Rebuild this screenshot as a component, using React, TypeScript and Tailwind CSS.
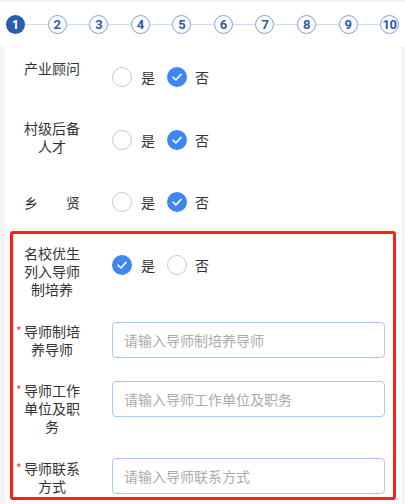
import React from 'react'

const font = { fontFamily: '"Noto Sans CJK SC", "Noto Sans", sans-serif' }

function Steps() {
  const nums = [1, 2, 3, 4, 5, 6, 7, 8, 9, 10]
  return (
    <div className="flex items-center bg-white h-[45px] px-[6px]">
      {nums.map((n, i) => (
        <React.Fragment key={n}>
          {i > 0 && <div className="flex-1 h-px bg-[#cfdcef]" />}
          <div
            className={
              n === 1
                ? 'w-[19px] h-[19px] rounded-full bg-[#2b5cab] text-white flex items-center justify-center text-[13px] font-bold'
                : 'w-[19px] h-[19px] rounded-full border border-[#7d9fd6] bg-white text-[#2b5cab] flex items-center justify-center text-[13px] font-bold tracking-[-0.5px]'
            }
            style={{ fontFamily: 'Roboto, "Liberation Sans", sans-serif' }}
          >
            {n}
          </div>
        </React.Fragment>
      ))}
    </div>
  )
}

function Radio({ checked, className = '' }: { checked: boolean; className?: string }) {
  if (checked) {
    return (
      <span className={`shrink-0 w-5 h-5 rounded-full bg-[#3e86f1] flex items-center justify-center ${className}`}>
        <svg width="12" height="12" viewBox="0 0 12 12" fill="none">
          <path d="M2 6.2 L4.9 9 L10 3.4" stroke="white" strokeWidth="1.6" strokeLinecap="round" strokeLinejoin="round" />
        </svg>
      </span>
    )
  }
  return <span className={`shrink-0 block w-5 h-5 rounded-full border border-[#c9c9c9] bg-white ${className}`} />
}

function YesNo({ yes }: { yes: boolean }) {
  return (
    <div className="flex items-center text-[14px] text-[#333] leading-5">
      <Radio checked={yes} />
      <span className="ml-[9px]">是</span>
      <Radio checked={!yes} className="ml-3" />
      <span className="ml-[8px]">否</span>
    </div>
  )
}

function Label({ lines, required }: { lines: string[]; required?: boolean }) {
  return (
    <div className="relative w-[56px] text-center text-[14px] leading-[18px] text-[#333]">
      {required && <span className="absolute -left-[8px] top-0 text-[#e53935] text-[12px]">*</span>}
      {lines.map((l) => (
        <div key={l} className="whitespace-pre">{l}</div>
      ))}
    </div>
  )
}

function Field({ placeholder, mt }: { placeholder: string; mt: string }) {
  return (
    <div className={`ml-8 ${mt} w-[273px] h-9 border border-[#a9c9f7] rounded-[4px] flex items-center pl-[11px] text-[14px] text-[#ababab]`}>
      {placeholder}
    </div>
  )
}

export default function App() {
  return (
    <div className="w-[405px] h-[504px] overflow-hidden bg-[#f4f4f4]" style={font}>
      <div className="h-[2px] bg-[#f1f1f1]" />
      <Steps />
      <div className="mx-[5px] w-[396px] bg-white pb-4">
        <div className="flex items-start h-[58px] pl-[19px]">
          <div className="pt-3">
            <Label lines={['产业顾问']} />
          </div>
          <div className="ml-8 pt-5">
            <YesNo yes={false} />
          </div>
        </div>
        <div className="flex items-start h-[75px] pl-[19px]">
          <div className="pt-[14px]">
            <Label lines={['村级后备', '人才']} />
          </div>
          <div className="ml-8 pt-[25px]">
            <YesNo yes={false} />
          </div>
        </div>
        <div className="flex items-start h-[51px] pl-[19px]">
          <div className="pt-[13px]">
            <Label lines={['乡　　贤']} />
          </div>
          <div className="ml-8 pt-3">
            <YesNo yes={false} />
          </div>
        </div>

        <div className="ml-[5px] w-[386px] border-[3px] border-[#ff1f14] rounded-[3px] pl-[11px]">
          <div className="flex items-start h-[76px]">
            <div className="pt-[10px]">
              <Label lines={['名校优生', '列入导师', '制培养']} />
            </div>
            <div className="ml-8 pt-[21px]">
              <YesNo yes={true} />
            </div>
          </div>
          <div className="flex items-start h-[59px]">
            <div className="pt-3">
              <Label required lines={['导师制培', '养导师']} />
            </div>
            <Field placeholder="请输入导师制培养导师" mt="mt-3" />
          </div>
          <div className="flex items-start h-[78px]">
            <div className="pt-3">
              <Label required lines={['导师工作', '单位及职', '务']} />
            </div>
            <Field placeholder="请输入导师工作单位及职务" mt="mt-3" />
          </div>
          <div className="flex items-start h-[50px]">
            <div className="pt-3">
              <Label required lines={['导师联系', '方式']} />
            </div>
            <Field placeholder="请输入导师联系方式" mt="mt-[11px]" />
          </div>
        </div>
      </div>
    </div>
  )
}
